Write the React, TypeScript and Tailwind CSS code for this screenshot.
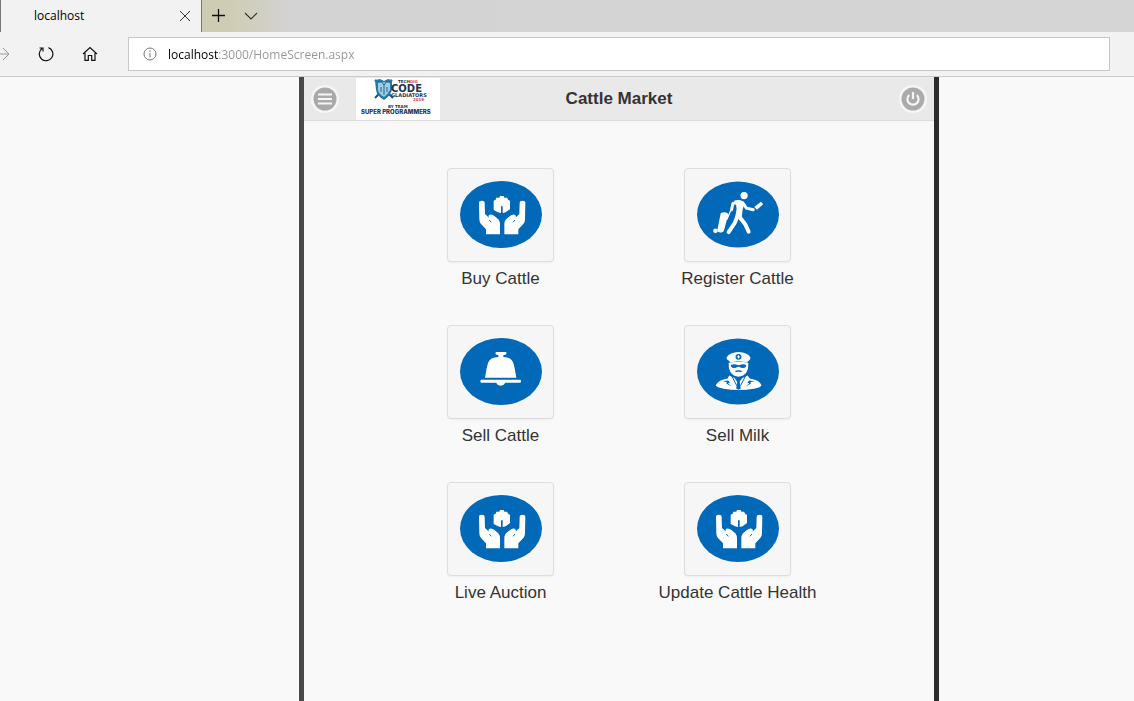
import type { ReactNode } from "react";

function HandsIcon() {
  const hand =
    "M117 129 Q117 122 125 122 Q134 122 134 129 L135 162 L147 173 Q143 167 149 164 Q156 162 163 168 L175 178 Q180 184 180 194 L180 223 L138 223 L138 208 L123 192 Q118 187 118 178 Z";
  return (
    <svg viewBox="60 63 246 201" className="h-[67px] w-[82px]" aria-hidden="true">
      <ellipse cx="183" cy="163.500" rx="123" ry="100.500" fill="#0169b8" />
      <g fill="#fff">
        <path d={hand} />
        <path d={hand} transform="translate(373 0) scale(-1 1)" />
        <path d="M169 113 L178 113 L180 108 H191 L193 113 L201 113 L205 120 L210 122 V147 L197 157 L188 159 V139 H183 V159 L174 157 L161 150 V122 L167 119 Z" />
      </g>
      <path d="M148 180 L154 187 M225 180 L219 187" stroke="#0169b8" strokeWidth="3" />
    </svg>
  );
}

function TravellerIcon() {
  return (
    <svg viewBox="67 63 249 201" className="h-[67px] w-[82px]" aria-hidden="true">
      <ellipse cx="191.500" cy="163.500" rx="124.500" ry="100.500" fill="#0169b8" />
      <g fill="none" stroke="#fff" strokeLinecap="round" strokeLinejoin="round">
        <path d="M190 127 L176 130 L172 149" strokeWidth="9" />
        <path d="M206 128 L217 144 L238 149" strokeWidth="9" />
        <path d="M189 171 L181 190 L163 217" strokeWidth="12" />
        <path d="M196 171 L213 192 L224 216" strokeWidth="12" />
        <path d="M170 150 L158 178" strokeWidth="4" />
      </g>
      <g fill="#fff">
        <circle cx="210" cy="106" r="11" />
        <path d="M179 122 Q194 117 206 123 L210 132 L205 151 L203 176 L182 177 L187 148 L186 134 Z" />
        <path d="M241 141 L261 125 L268 132 L249 149 Z" />
        <path d="M139 160 Q147 154 158 158 L162 163 L149 212 Q145 220 137 218 L128 215 Z" />
        <circle cx="123" cy="213" r="7" />
      </g>
    </svg>
  );
}

function BellIcon() {
  return (
    <svg viewBox="60 52 246 201" className="h-[67px] w-[82px]" aria-hidden="true">
      <ellipse cx="183" cy="152.500" rx="123" ry="100.500" fill="#0169b8" />
      <g fill="#fff">
        <path d="M168 94 H198 Q202 101 196 102 L190 103 L190 109 Q214 109 220 127 L224 143 L229 171 H135 L140 143 L144 127 Q150 109 175 109 L175 103 L170 102 Q164 101 168 94 Z" />
        <path d="M123 177 H241 Q245 182 241 186 H196 Q191 195 182 195 Q173 195 168 186 H123 Q119 181 123 177 Z" />
      </g>
    </svg>
  );
}

function OfficerIcon() {
  return (
    <svg viewBox="67 52 249 201" className="h-[67px] w-[82px]" aria-hidden="true">
      <ellipse cx="191.500" cy="152.500" rx="124.500" ry="100.500" fill="#0169b8" />
      <g fill="#fff">
        <path d="M157 109 Q167 94 193 93 Q220 94 229 109 Q230 118 221 121 L220 126 Q192 116 167 126 L165 120 Q155 116 157 109 Z" />
        <path d="M163 127 Q192 119 223 127 L222 144 Q218 158 207 165 Q193 172 179 165 Q168 157 164 144 Z" />
        <path d="M165 165 L181 172 L192 188 L205 172 L221 165 L227 174 Q256 178 263 194 Q261 200 240 205 Q193 213 148 205 Q126 200 124 194 Q132 178 160 174 Z" />
      </g>
      <g fill="#0169b8">
        <circle cx="193" cy="108" r="9" />
        <path d="M170 133 Q180 128 190 133 H197 Q207 128 216 133 Q218 141 207 142 Q200 142 195 138 H191 Q186 142 179 142 Q169 141 170 133 Z" />
        <path d="M182 151 Q193 147 205 151 L201 154 Q193 152 185 154 Z" />
        <path d="M190 181 H196 L200 204 L193 208 L186 204 Z" />
        <path d="M146 182 L162 180 L167 187 L161 188 L171 198 L156 189 L158 185 Z M241 182 L225 180 L220 187 L226 188 L215 198 L231 189 L229 185 Z" />
      </g>
      <path d="M193 103 V113 M188 108 H198" stroke="#fff" strokeWidth="3" />
      <path d="M172 165 L188 196 M215 165 L199 196" stroke="#0169b8" strokeWidth="3" />
    </svg>
  );
}

function TeamLogo() {
  return (
    <div className="h-[42px] w-[84px] bg-white">
      <svg viewBox="0 0 84 42" className="h-full w-full" role="img" aria-label="Code Gladiators logo">
        <path d="M19 2 L37 20 M36 2 L19 20" stroke="#27536e" strokeWidth="2" />
        <path d="M19 2 L24 1 L28 3 L32 1 L36 2 V12 Q34 18 28 22 Q21 18 20 12 Z" fill="#2478a5" />
        <path d="M22 5 L28 4 L34 5 V12 Q32 16 28 19 Q23 16 22 12 Z" fill="#9bd0e5" />
        <path d="M25 3 L28 7 L31 3 M28 6 V17 M25 9 V14 M31 9 V14" stroke="#28638a" fill="none" />
        <g fontFamily="DejaVu Sans, sans-serif" fontWeight="700" fill="#203452">
          <text x="42" y="5" fontSize="4">TECH<tspan fill="#d8414d">GIG</tspan></text>
          <text x="35" y="14" fontSize="10">CODE</text>
          <text x="35" y="19" fontSize="5">GLADIATORS</text>
          <text x="57" y="23" fontSize="4" fill="#d8414d">2019</text>
          <text x="32" y="30" fontSize="4">BY TEAM</text>
          <text x="5" y="36" fontSize="6" fontFamily="Inter, sans-serif" fontWeight="800">SUPER PROGRAMMERS</text>
        </g>
      </svg>
    </div>
  );
}

const tiles: { label: string; icon: ReactNode }[] = [
  { label: "Buy Cattle", icon: <HandsIcon /> },
  { label: "Register Cattle", icon: <TravellerIcon /> },
  { label: "Sell Cattle", icon: <BellIcon /> },
  { label: "Sell Milk", icon: <OfficerIcon /> },
  { label: "Live Auction", icon: <HandsIcon /> },
  { label: "Update Cattle Health", icon: <HandsIcon /> },
];

function BrowserChrome() {
  return (
    <div className="border-b border-[#cacaca] bg-[#f2f2f2] font-['Open_Sans',sans-serif] text-black">
      <div className="flex h-8 bg-[linear-gradient(90deg,#cdcbae_200px,#d0cdb9_240px,#d3d3d3_290px,#d5d5d5_100%)]">
        <div className="flex w-[202px] items-center justify-between border-x border-[#777] bg-[#f2f2f2] pr-[10px] pl-[33px]">
          <span className="text-xs">localhost</span>
          <button type="button" aria-label="Close tab">
            <svg viewBox="0 0 12 12" className="size-3" fill="none" stroke="#333">
              <path d="M1 1 L11 11 M11 1 L1 11" />
            </svg>
          </button>
        </div>
        <div className="flex items-center gap-[18px] pl-[10px]">
          <button type="button" aria-label="New tab">
            <svg viewBox="0 0 14 14" className="size-[14px]" fill="none" stroke="#111">
              <path d="M6.500 0 V13 M0 6.500 H13" strokeWidth="1.300" />
            </svg>
          </button>
          <button type="button" aria-label="Tab list">
            <svg viewBox="0 0 14 8" className="h-2 w-[14px]" fill="none" stroke="#333">
              <path d="M1 1 L7 7 L13 1" strokeWidth="1.100" />
            </svg>
          </button>
        </div>
      </div>
      <div className="flex h-11 items-center pr-6">
        <button type="button" aria-label="Forward" className="w-[10px]">
          <svg viewBox="0 0 10 14" className="h-[14px] w-[10px]" fill="none" stroke="#999">
            <path d="M0 7 H9 M3 1 L9 7 L3 13" />
          </svg>
        </button>
        <button type="button" aria-label="Refresh" className="ml-7">
          <svg viewBox="0 0 16 16" className="size-4" fill="none" stroke="#111" strokeWidth="1.200">
            <path d="M10.500 1.600 A6.800 6.800 0 1 1 4 2.500 M1.500 2 H5 V5.500" />
          </svg>
        </button>
        <button type="button" aria-label="Home" className="ml-7">
          <svg viewBox="0 0 16 16" className="size-4" fill="none" stroke="#111" strokeWidth="1.200">
            <path d="M1 8 L8 1.500 L15 8 M3 7 V14.400 H6.300 V9.500 H9.700 V14.400 H13 V7" />
          </svg>
        </button>
        <div className="ml-[30px] flex h-[34px] flex-1 items-center border border-[#c8c8c8] bg-white pr-2 pl-[14px]">
          <svg viewBox="0 0 14 14" className="size-[14px]" fill="none" stroke="#777" aria-hidden="true">
            <circle cx="7" cy="7" r="6" />
            <path d="M7 6 V10.500 M7 3.500 V5" />
          </svg>
          <input
            aria-label="Address"
            defaultValue="localhost:3000/HomeScreen.aspx"
            className="ml-[11px] h-6 min-w-0 flex-1 bg-[linear-gradient(90deg,#000_50px,#949494_50px)] bg-clip-text text-xs text-transparent caret-black outline-none"
          />
        </div>
      </div>
    </div>
  );
}

export default function App() {
  return (
    <div className="flex min-h-screen flex-col bg-[#f9f9f9]">
      <BrowserChrome />
      <div className="flex flex-1 flex-col pl-[104px] font-['Liberation_Sans',sans-serif] text-[#333]">
        <div className="mx-auto w-full max-w-[640px] flex-1 border-x-[5px] border-l-[#494949] border-r-[#2d2d2d]">
          <header className="grid h-11 grid-cols-[1fr_auto_1fr] items-center border-b border-[#dcdcdc] bg-[#e9e9e9] px-[7px]">
            <div className="flex items-center gap-[17px]">
              <button type="button" aria-label="Menu" className="rounded-full">
                <svg viewBox="0 0 28 28" className="size-7">
                  <circle cx="14" cy="14" r="14" fill="#f6f6f6" />
                  <circle cx="14" cy="14" r="11.500" fill="#a9a9a9" />
                  <path d="M7 9.500 H21 M7 14 H21 M7 18.500 H21" stroke="#f6f6f6" strokeWidth="2.200" />
                </svg>
              </button>
              <TeamLogo />
            </div>
            <h1 className="text-[17px] leading-6 font-bold">Cattle Market</h1>
            <button type="button" aria-label="Log out" className="justify-self-end rounded-full">
              <svg viewBox="0 0 28 28" className="size-7" fill="none">
                <circle cx="14" cy="14" r="14" fill="#f6f6f6" />
                <circle cx="14" cy="14" r="11.500" fill="#ababab" />
                <path d="M14 7 V14 M10.200 10 A5.600 5.600 0 1 0 17.800 10" stroke="#f6f6f6" strokeWidth="2.200" />
              </svg>
            </button>
          </header>
          <main className="mx-auto grid max-w-[474px] grid-cols-2 gap-y-[34px] pt-[47px]">
            {tiles.map(({ label, icon }) => (
              <a key={label} href="#" className="flex flex-col items-center gap-[5px]">
                <span className="flex h-[94px] w-[107px] items-center justify-center rounded border border-[#dedede] bg-[#f6f6f6] pb-[2px] shadow-xs">
                  {icon}
                </span>
                <span className="text-[17px] leading-6 whitespace-nowrap">{label}</span>
              </a>
            ))}
          </main>
        </div>
      </div>
    </div>
  );
}
